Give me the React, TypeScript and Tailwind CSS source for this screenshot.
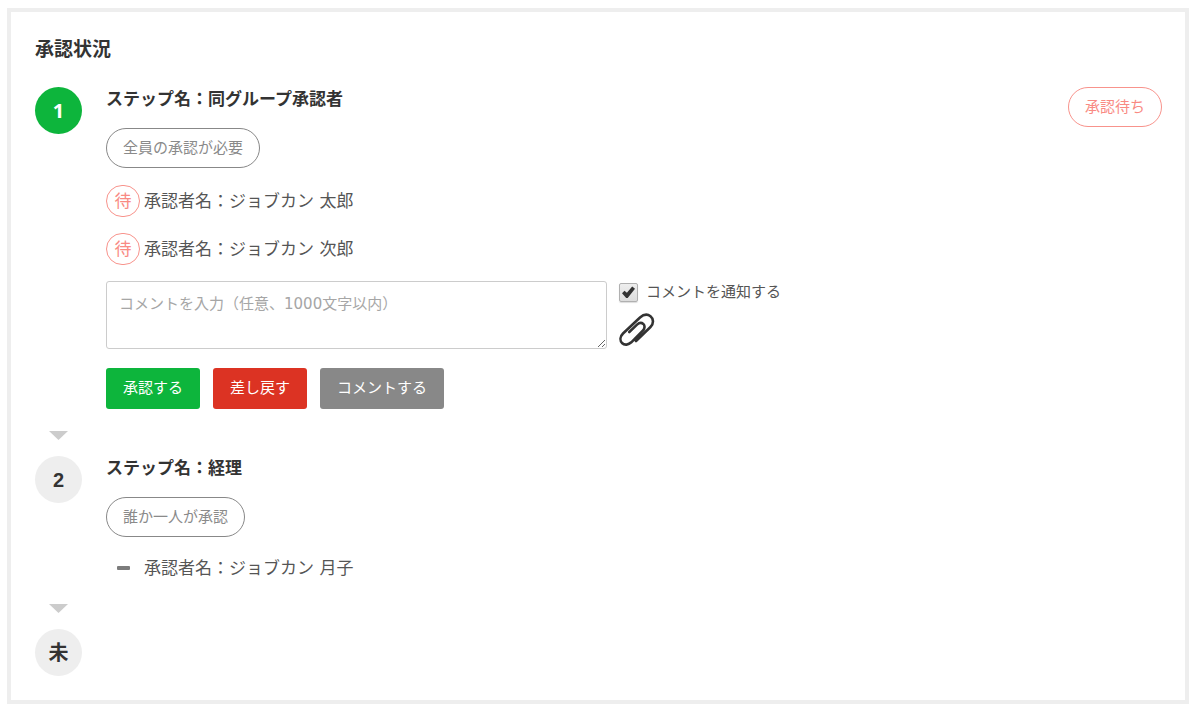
import type { ReactNode } from "react";

function Pill({ children, tone }: { children: ReactNode; tone: "gray" | "red" }) {
  const color = tone === "red" ? "border-[#f8938c] text-[#f98a83]" : "border-[#888] text-[#8a8a8a]";
  return (
    <span className={`flex h-10 w-fit shrink-0 items-center rounded-full border px-4 text-[15px] leading-6 ${color}`}>
      {children}
    </span>
  );
}

function StepMark({ children, active = false }: { children: ReactNode; active?: boolean }) {
  const color = active
    ? "bg-[#0db53c] font-['Open_Sans',sans-serif] text-white"
    : "bg-[#eee] font-['Liberation_Sans','Noto_Sans_CJK_JP',sans-serif] text-[#333]";
  return (
    <div className={`flex size-[47px] shrink-0 items-center justify-center rounded-full text-xl font-bold ${color}`}>
      {children}
    </div>
  );
}

function StepArrow() {
  return (
    <div className="mt-[22px] mb-4 flex w-[47px] justify-center" aria-hidden="true">
      <svg className="block h-[9px] w-[19px]" viewBox="0 0 19 9">
        <path d="M0 0H19L9.5 9Z" fill="#ccc" />
      </svg>
    </div>
  );
}

function StepHeading({ title, rule }: { title: string; rule: string }) {
  return (
    <div className="mb-[17px] flex flex-col gap-[17px]">
      <h2 className="text-[17px] leading-6 font-bold text-[#333]">{title}</h2>
      <Pill tone="gray">{rule}</Pill>
    </div>
  );
}

function Approver({ name, waiting = false }: { name: string; waiting?: boolean }) {
  return (
    <li className="flex items-center gap-1">
      <span className="flex w-[34px] shrink-0 justify-center">
        {waiting ? (
          <span className="flex h-8 w-full items-center justify-center rounded-full border border-[#f8938c] text-[17px] leading-none text-[#f98a83]">
            待
          </span>
        ) : (
          <span className="h-1 w-[13px] rounded-[1px] bg-[#7c7c7c]" />
        )}
      </span>
      <span className="text-[17px] leading-7">承認者名：{name}</span>
    </li>
  );
}

function PaperclipIcon() {
  return (
    <svg className="block h-[34px] w-9" viewBox="0 0 36 34" fill="none" stroke="#333" strokeWidth="2.6" strokeLinecap="round" aria-hidden="true">
      <path d="M17 28L31.5 14C35 10.500 34.500 5.500 31.500 3.200C28.500 1 24.500 1.500 21 4.500L4 20.500C1 23.500 .8 27.500 3 30C5.500 32.500 9.500 32 12.300 29.300L23.800 17.700C26 15.500 26 12.500 24.300 10.900C22.500 9.400 20.200 9.600 18 11.600L10.300 19" />
    </svg>
  );
}

export default function App() {
  return (
    <div className="bg-white py-2 pr-[11px] pl-[7px] font-['DejaVu_Sans','Noto_Sans_CJK_JP',sans-serif] text-[#555]">
      <main className="border-4 border-[#eee] py-6 pr-[23px] pl-6">
        <h1 className="text-[19px] leading-[26px] font-bold text-[#333]">承認状況</h1>

        <section className="mt-[25px] flex items-start gap-6">
          <StepMark active>1</StepMark>
          <div className="min-w-0 flex-1">
            <StepHeading title="ステップ名：同グループ承認者" rule="全員の承認が必要" />
            <ul className="flex flex-col gap-4">
              <Approver name="ジョブカン 太郎" waiting />
              <Approver name="ジョブカン 次郎" waiting />
            </ul>
            <div className="mt-4 flex items-start gap-3">
              <textarea
                aria-label="コメント"
                placeholder="コメントを入力（任意、1000文字以内）"
                className="block h-[68px] w-[501px] min-w-0 rounded-[3px] border border-[#ccc] px-3 py-[11px] text-[15px] leading-[22px] placeholder:text-[#a6a6a6]"
              />
              <div className="flex flex-col gap-2.5">
                <label className="flex items-center gap-2 text-[15px] leading-[22px]">
                  <span className="grid size-[19px] shrink-0">
                    <input
                      type="checkbox"
                      defaultChecked
                      className="peer col-start-1 row-start-1 size-full appearance-none rounded-[2px] border border-[#b0b0b0] bg-linear-to-b from-[#eee] to-[#ddd] shadow-[0_1px_1px_#ddd]"
                    />
                    <svg
                      className="pointer-events-none invisible col-start-1 row-start-1 size-full peer-checked:visible"
                      viewBox="0 0 19 19"
                      aria-hidden="true"
                    >
                      <path d="M3 10.300L5.500 7.700L7.900 9.700L13.200 3.500L16 5.800L8.700 15H7.200Z" fill="#333" />
                    </svg>
                  </span>
                  コメントを通知する
                </label>
                <button type="button" aria-label="ファイルを添付" className="w-fit">
                  <PaperclipIcon />
                </button>
              </div>
            </div>
            <div className="mt-[19px] flex flex-wrap gap-[13px] text-[15px] leading-[23px] text-white">
              <button type="button" className="rounded-[3px] bg-[#0db53c] px-[17px] py-[9px]">承認する</button>
              <button type="button" className="rounded-[3px] bg-[#dc3323] px-[17px] py-[9px]">差し戻す</button>
              <button type="button" className="rounded-[3px] bg-[#888] px-[17px] py-[9px]">コメントする</button>
            </div>
          </div>
          <Pill tone="red">承認待ち</Pill>
        </section>

        <StepArrow />

        <section className="flex items-start gap-6">
          <StepMark>2</StepMark>
          <div className="min-w-0 flex-1">
            <StepHeading title="ステップ名：経理" rule="誰か一人が承認" />
            <ul>
              <Approver name="ジョブカン 月子" />
            </ul>
          </div>
        </section>

        <StepArrow />

        <StepMark>未</StepMark>
      </main>
    </div>
  );
}
